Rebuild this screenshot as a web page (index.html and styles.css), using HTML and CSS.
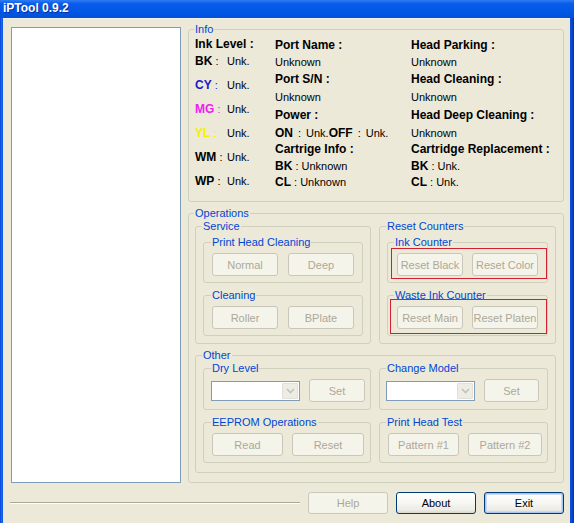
FILE: index.html
```html
<!DOCTYPE html>
<html>
<head>
<meta charset="utf-8">
<title>iPTool 0.9.2</title>
<link rel="stylesheet" href="styles.css">
</head>
<body>
<div class="window">
  <div class="titlebar"><span class="title">iPTool 0.9.2</span></div>
  <div class="frame">
    <div class="edge-l"></div>
    <div class="client">
      <div class="main">
        <div class="listbox"></div>
        <div class="panel">
          <fieldset class="group info">
            <legend>Info</legend>
            <div class="info-body">
              <div class="col1">
                <div class="row"><b>Ink Level :</b></div>
                <div class="row"><span class="k"><b>BK</b> :</span>Unk.</div>
                <div class="row sp cy"><span class="k"><b>CY</b> :</span><span class="v">Unk.</span></div>
                <div class="row sp mg"><span class="k"><b>MG</b> :</span><span class="v">Unk.</span></div>
                <div class="row sp yl"><span class="k"><b>YL</b> :</span><span class="v">Unk.</span></div>
                <div class="row sp"><span class="k"><b>WM</b> :</span>Unk.</div>
                <div class="row sp"><span class="k"><b>WP</b> :</span>Unk.</div>
              </div>
              <div class="cols">
                <div class="c"><b>Port Name :</b></div>
                <div class="c"><b>Head Parking :</b></div>
                <div class="c">Unknown</div>
                <div class="c">Unknown</div>
                <div class="c"><b>Port S/N :</b></div>
                <div class="c"><b>Head Cleaning :</b></div>
                <div class="c">Unknown</div>
                <div class="c">Unknown</div>
                <div class="c"><b>Power :</b></div>
                <div class="c"><b>Head Deep Cleaning :</b></div>
                <div class="c"><b>ON</b><span class="sep">:</span>Unk.<b>OFF</b><span class="sep">:</span>Unk.</div>
                <div class="c">Unknown</div>
                <div class="c"><b>Cartrige Info :</b></div>
                <div class="c"><b>Cartridge Replacement :</b></div>
                <div class="c"><b>BK</b>&nbsp;:&nbsp;Unknown</div>
                <div class="c"><b>BK</b>&nbsp;:&nbsp;Unk.</div>
                <div class="c"><b>CL</b>&nbsp;:&nbsp;Unknown</div>
                <div class="c"><b>CL</b>&nbsp;:&nbsp;Unk.</div>
              </div>
            </div>
          </fieldset>

          <fieldset class="group ops">
            <legend>Operations</legend>
            <div class="pair">
              <fieldset class="group mid">
                <legend>Service</legend>
                <fieldset class="group inner first">
                  <legend>Print Head Cleaning</legend>
                  <div class="btns g10">
                    <button class="btn w66" disabled>Normal</button>
                    <button class="btn w66" disabled>Deep</button>
                  </div>
                </fieldset>
                <fieldset class="group inner next">
                  <legend>Cleaning</legend>
                  <div class="btns g10">
                    <button class="btn w66" disabled>Roller</button>
                    <button class="btn w66" disabled>BPlate</button>
                  </div>
                </fieldset>
              </fieldset>
              <fieldset class="group mid">
                <legend>Reset Counters</legend>
                <fieldset class="group inner first">
                  <legend>Ink Counter</legend>
                  <div class="mark mark1">
                    <button class="btn w66" disabled>Reset Black</button>
                    <button class="btn w66" disabled>Reset Color</button>
                  </div>
                </fieldset>
                <fieldset class="group inner next">
                  <legend>Waste Ink Counter</legend>
                  <div class="mark mark2">
                    <button class="btn w66" disabled>Reset Main</button>
                    <button class="btn w66" disabled>Reset Platen</button>
                  </div>
                </fieldset>
              </fieldset>
            </div>

            <fieldset class="group other">
              <legend>Other</legend>
              <div class="quad">
                <fieldset class="group inner">
                  <legend>Dry Level</legend>
                  <div class="btns g9">
                    <div class="combo"><span class="drop"><svg width="9" height="6" viewBox="0 0 9 6"><path d="M1 1 L4.5 4.5 L8 1" fill="none" stroke="#C4C2B8" stroke-width="1.6"/></svg></span></div>
                    <button class="btn w56" disabled>Set</button>
                  </div>
                </fieldset>
                <fieldset class="group inner">
                  <legend>Change Model</legend>
                  <div class="btns g9">
                    <div class="combo"><span class="drop"><svg width="9" height="6" viewBox="0 0 9 6"><path d="M1 1 L4.5 4.5 L8 1" fill="none" stroke="#C4C2B8" stroke-width="1.6"/></svg></span></div>
                    <button class="btn w55" disabled>Set</button>
                  </div>
                </fieldset>
                <fieldset class="group inner">
                  <legend>EEPROM Operations</legend>
                  <div class="btns g9">
                    <button class="btn w71" disabled>Read</button>
                    <button class="btn w72" disabled>Reset</button>
                  </div>
                </fieldset>
                <fieldset class="group inner">
                  <legend>Print Head Test</legend>
                  <div class="btns g9 shift1">
                    <button class="btn w71" disabled>Pattern #1</button>
                    <button class="btn w74" disabled>Pattern #2</button>
                  </div>
                </fieldset>
              </div>
            </fieldset>
          </fieldset>
        </div>
      </div>

      <div class="footer">
        <div class="separator"></div>
        <button class="btn w80" disabled>Help</button>
        <button class="btn w80 active">About</button>
        <button class="btn w80 active default">Exit</button>
      </div>
    </div>
    <div class="edge-r"></div>
  </div>
</div>
</body>
</html>
```

FILE: styles.css
```css
* { box-sizing: border-box; }
html, body { margin: 0; padding: 0; }
body {
  width: 574px;
  height: 523px;
  overflow: hidden;
  background: #ECE9D8;
  font-family: "Liberation Sans", Arial, sans-serif;
  font-size: 11px;
  color: #000;
}
b { font-weight: bold; font-size: 12px; }

.window { display: flex; flex-direction: column; height: 523px; }

.titlebar {
  height: 18px;
  flex: none;
  padding-left: 3px;
  background: linear-gradient(to bottom, #2F7DF4 0%, #0A5CEB 20%, #0058E6 60%, #0050D8 100%);
}
.title {
  color: #fff;
  font-weight: bold;
  font-size: 12px;
  line-height: 17px;
  text-shadow: 1px 1px 0 #0A2C9C;
}

.frame { flex: 1; display: flex; min-height: 0; }
.edge-l { width: 3px; flex: none; background: linear-gradient(to right, #0842D6, #1A66EC 50%, #0A55E0); }
.edge-r { width: 4px; flex: none; background: linear-gradient(to right, #0A50DC, #0846D2 50%, #0033B8); }

.client {
  flex: 1;
  padding: 5px 6px 0 8px;
  display: flex;
  flex-direction: column;
  border-top: 1px solid #F4F2E8;
}

.main { display: flex; gap: 7px; align-items: flex-start; margin-top: -1px; }
.listbox {
  width: 170px;
  height: 456px;
  margin-top: 4px;
  background: #fff;
  border: 1px solid #7F9DB9;
}
.panel { flex: 1; min-width: 0; }

/* group boxes */
.group {
  margin: 0;
  padding: 0;
  min-width: 0;
  border: 1px solid #D0D0BF;
  border-radius: 3px;
}
.group > legend {
  color: #0046D5;
  font-size: 11px;
  line-height: 13px;
  padding: 0 1px;
  margin-left: -1px;
}

/* Info */
.info { padding: 0 6px 11px 6px; }
.info-body { display: flex; }
.col1 { width: 80px; flex: none; }
.col1 .row { height: 17px; line-height: 17px; white-space: nowrap; }
.col1 .row.sp { margin-top: 7px; }
.k { display: inline-block; width: 32px; }
.cy .k { color: #1A1AC8; }
.mg .k { color: #F020F0; }
.yl .k { color: #F4F000; }
.cols {
  flex: 1;
  display: grid;
  grid-template-columns: 136px auto;
  grid-template-rows: 17px 17px 18px 17px 20px 16px 16px 17px 16px;
}
.c { display: flex; align-items: center; white-space: nowrap; }
.sep { margin: 0 5px; }

/* Operations */
.ops { margin-top: 5px; padding: 0 7px 9px 6px; }
.pair { display: grid; grid-template-columns: 176px 177px; column-gap: 8px; }
.mid { padding: 0 7px 7px 7px; }
.inner { padding: 0 7px 6px 7px; }
.inner.first { margin-top: 3px; }
.inner.next { margin-top: 6px; }
.mid:first-child > .inner { padding-left: 8px; }
.mid:last-child > .inner { padding-bottom: 3px; }

.btns { display: flex; align-items: center; padding-top: 4px; }
.g10 { gap: 10px; }
.g9 { gap: 9px; }
.shift1 { margin-left: 1px; }

.mark {
  display: flex;
  gap: 9px;
  border: 1px solid #D2202E;
  margin-right: -7px;
}
.mark1 { margin-top: -1px; margin-left: -4px; padding: 4px 0 2px 5px; margin-bottom: 0; }
.mark2 { margin-top: -3px; margin-left: -5px; padding: 6px 0 4px 6px; margin-bottom: -2px; }

.other { margin-top: 5px; padding: 0 7px 9px 7px; }
.quad {
  display: grid;
  grid-template-columns: 168px 169px;
  column-gap: 8px;
  row-gap: 6px;
}
.quad > .inner:nth-child(odd) { padding-left: 8px; }
.quad > .inner:nth-child(1),
.quad > .inner:nth-child(2) { padding-bottom: 7px; }

/* controls */
.btn {
  height: 23px;
  margin: 0;
  padding: 0;
  border: 1px solid #C9C7BA;
  border-radius: 3px;
  background: #F5F4EA;
  color: #ACA899;
  font-family: "Liberation Sans", Arial, sans-serif;
  font-size: 11px;
  white-space: nowrap;
  flex: none;
}
.w55 { width: 55px; }
.w56 { width: 56px; }
.w66 { width: 66px; }
.w71 { width: 71px; }
.w72 { width: 72px; }
.w74 { width: 74px; }
.w80 { width: 80px; }

.combo {
  width: 89px;
  height: 20px;
  flex: none;
  background: #fff;
  border: 1px solid #7F9DB9;
  display: flex;
  justify-content: flex-end;
  padding: 1px;
  margin-left: -1px;
}
.drop {
  width: 16px;
  height: 100%;
  background: #EEEDE5;
  border: 1px solid #E2E0D6;
  border-radius: 1px;
  display: flex;
  align-items: center;
  justify-content: center;
}

/* footer */
.footer {
  display: flex;
  align-items: center;
  gap: 8px;
  margin-top: 9px;
  margin-left: -1px;
}
.separator {
  flex: 1;
  height: 2px;
  border-top: 1px solid #ACA899;
  border-bottom: 1px solid #FFFFFF;
}
.footer .btn { height: 22px; }
.btn.active {
  color: #000;
  border-color: #003C74;
  background: linear-gradient(to bottom, #FFFFFF 0%, #F6F6F2 50%, #ECEBE5 85%, #D9D7CC 100%);
}
.btn.default {
  box-shadow: inset 0 0 0 1px #A8C4F0, inset 0 0 0 2px #C8DAF6;
}
```
